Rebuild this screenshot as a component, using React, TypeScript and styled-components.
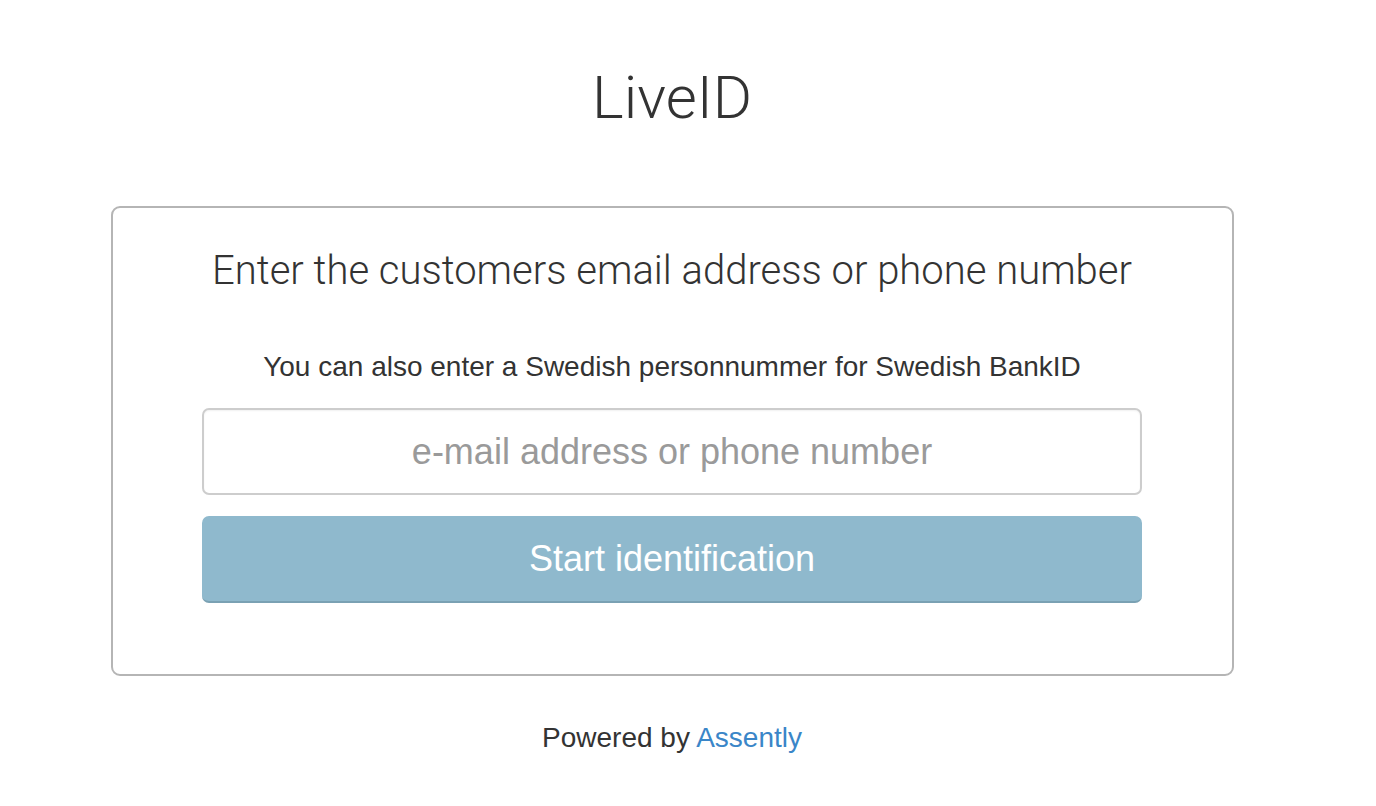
import React from "react";
import styled, { createGlobalStyle } from "styled-components";

const Global = createGlobalStyle`
  html, body { margin: 0; padding: 0; background: #fff; }
  body { font-family: "Liberation Sans", Arial, sans-serif; color: #333; }
`;

const Page = styled.div`
  width: 1344px;
  display: flex;
  flex-direction: column;
  align-items: center;
`;

const Title = styled.h1`
  margin: 58px 0 0;
  height: 80px;
  line-height: 80px;
  font-family: "Roboto", "Liberation Sans", sans-serif;
  font-weight: 300;
  font-size: 60px;
  color: #333;
`;

const Card = styled.div`
  box-sizing: border-box;
  margin-top: 68px;
  width: 1123px;
  height: 470px;
  border: 2px solid #b5b5b5;
  border-radius: 9px;
  display: flex;
  flex-direction: column;
  align-items: center;
  padding-top: 39px;
`;

const Heading = styled.h2`
  margin: 0;
  height: 48px;
  line-height: 48px;
  font-family: "Roboto", "Liberation Sans", sans-serif;
  font-weight: 300;
  font-size: 40px;
  color: #333;
`;

const Hint = styled.p`
  margin: 55px 0 0;
  height: 34px;
  line-height: 34px;
  font-size: 28px;
  color: #333;
`;

const Form = styled.div`
  margin-top: 24px;
  width: 940px;
  display: flex;
  flex-direction: column;
  gap: 21px;
`;

const Input = styled.input`
  box-sizing: border-box;
  width: 100%;
  height: 87px;
  border: 2px solid #cdcdcd;
  border-radius: 7px;
  box-shadow: inset 0 1px 2px rgba(0, 0, 0, 0.06);
  font-family: "Liberation Sans", Arial, sans-serif;
  font-size: 36px;
  text-align: center;
  color: #555;
  outline: none;
  &::placeholder { color: #9a9a9a; }
`;

const Button = styled.button`
  box-sizing: border-box;
  width: 100%;
  height: 87px;
  border: none;
  border-bottom: 2px solid #7aa1b3;
  border-radius: 7px;
  background: #8fb9cd;
  color: #fff;
  font-family: "Liberation Sans", Arial, sans-serif;
  font-size: 36px;
  text-align: center;
  cursor: pointer;
`;

const Footer = styled.p`
  margin: 47px 0 0;
  height: 30px;
  line-height: 30px;
  font-size: 28px;
  color: #333;
`;

const Link = styled.a`
  color: #3a86c8;
  text-decoration: none;
`;

export default function App() {
  return (
    <Page>
      <Global />
      <Title>LiveID</Title>
      <Card>
        <Heading>Enter the customers email address or phone number</Heading>
        <Hint>You can also enter a Swedish personnummer for Swedish BankID</Hint>
        <Form>
          <Input placeholder="e-mail address or phone number" />
          <Button>Start identification</Button>
        </Form>
      </Card>
      <Footer>
        Powered by <Link href="#">Assently</Link>
      </Footer>
    </Page>
  );
}
